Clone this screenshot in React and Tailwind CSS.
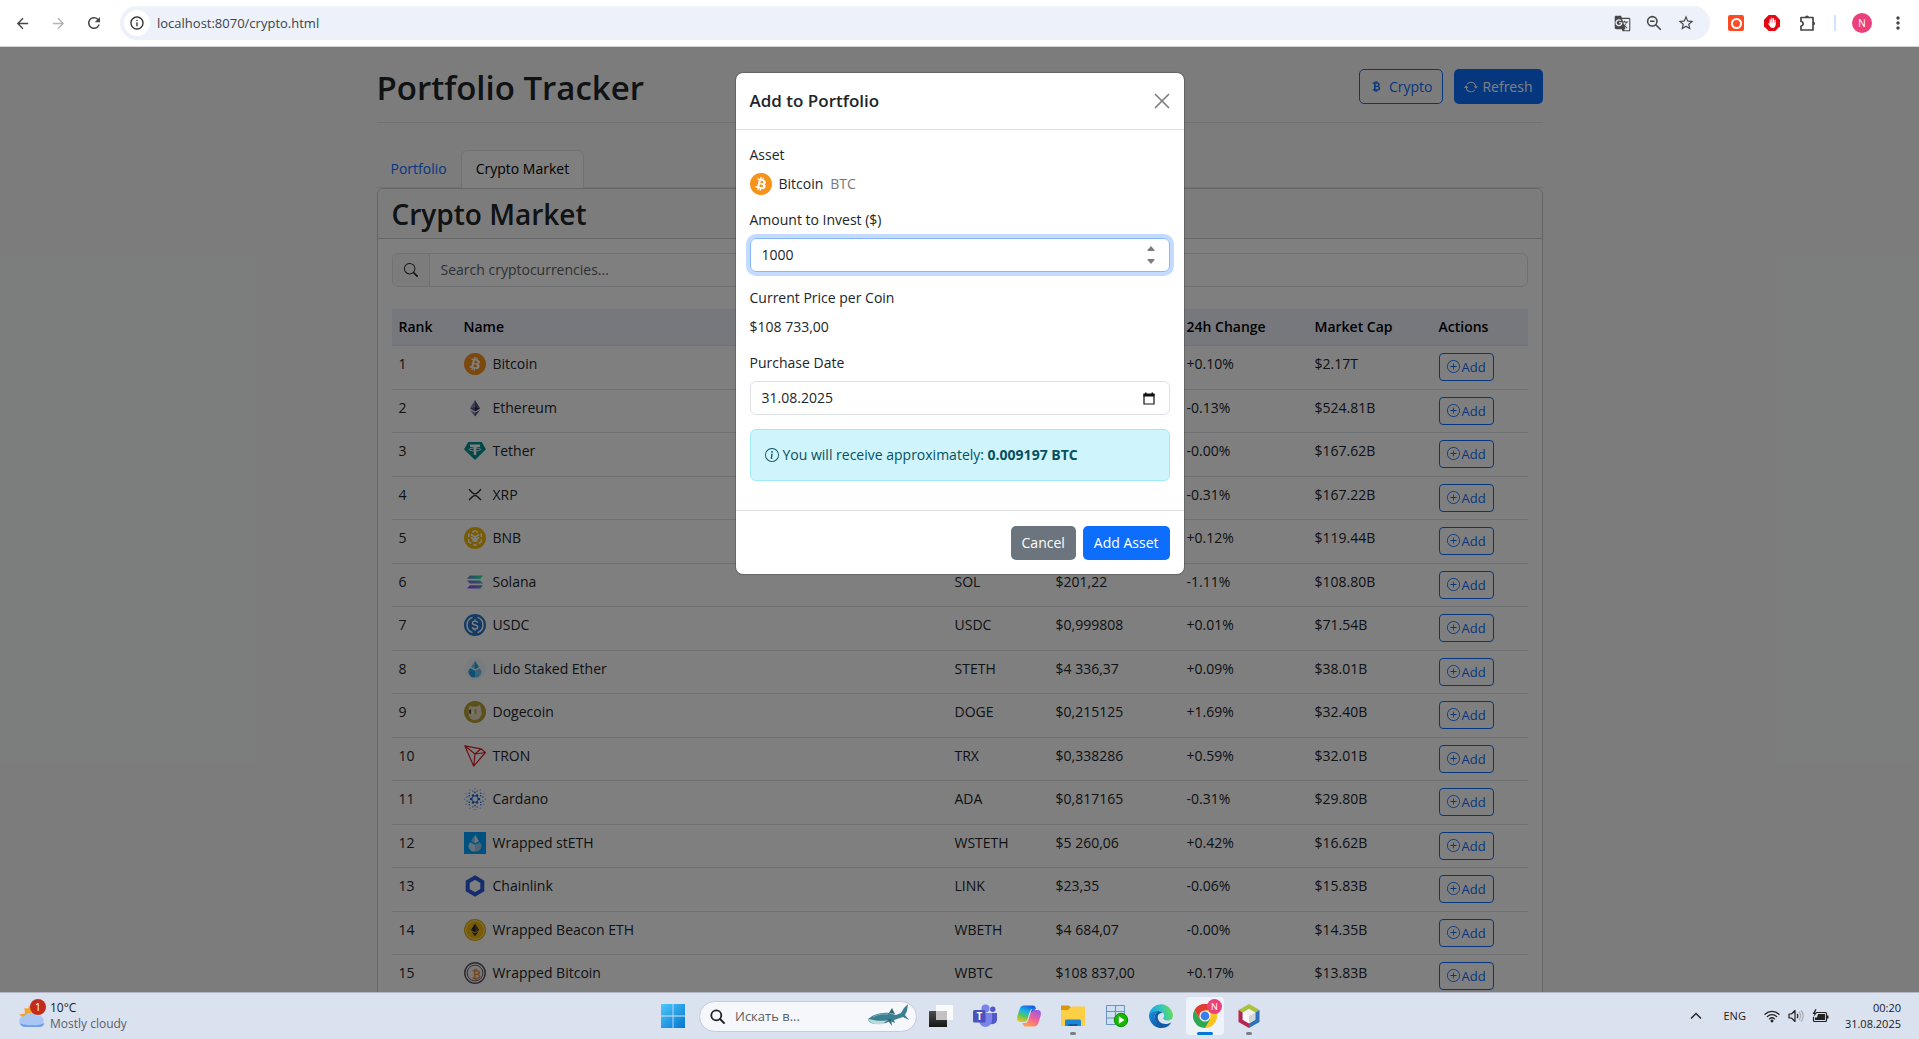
import React from "react";
import {
  BsArrowRepeat,
  BsCurrencyBitcoin,
  BsInfoCircle,
  BsPlusCircle,
  BsSearch,
} from "react-icons/bs";
import {
  MdArrowBack,
  MdArrowForward,
  MdGTranslate,
  MdMoreVert,
  MdOutlineInfo,
  MdRefresh,
  MdStarOutline,
} from "react-icons/md";
import { SiBitcoin } from "react-icons/si";

const ICON = "h-[22px] w-[22px] shrink-0";

function BitcoinIcon() {
  return (
    <span className="flex h-[22px] w-[22px] shrink-0 rounded-full bg-white">
      <SiBitcoin className="h-[22px] w-[22px] text-[#f7931a]" />
    </span>
  );
}

function EthereumIcon() {
  return (
    <svg viewBox="0 0 22 22" className={ICON}>
      <path d="M11 3v6.500L5.900 11.600z" fill="#7f80ad" />
      <path d="M11 3v6.500l5.100 2.100z" fill="#4a4978" />
      <path d="M5.900 11.600 11 9.400v5.200z" fill="#5a5990" />
      <path d="M16.100 11.600 11 9.400v5.200z" fill="#2b2a55" />
      <path d="M5.900 12.900 11 15.800v3.700z" fill="#7f80ad" />
      <path d="M16.100 12.900 11 15.800v3.700z" fill="#4a4978" />
    </svg>
  );
}

function TetherIcon() {
  return (
    <svg viewBox="0 0 22 22" className={ICON}>
      <path d="M4.200 2h13.600L22 9.300 11 20 0 9.300z" fill="#009393" />
      <path d="M6 4.500h10v2.400h-3.700v8.200H9.700V6.900H6z" fill="#fff" />
      <ellipse cx="11" cy="9.500" rx="5.800" ry="1.500" fill="none" stroke="#fff" strokeWidth=".9" />
    </svg>
  );
}

function XrpIcon() {
  return (
    <svg viewBox="0 0 22 22" className={ICON} fill="none" stroke="#23292f" strokeWidth="1.400">
      <path d="M5 5.300l3.400 3.400a3.700 3.700 0 0 0 5.200 0L17 5.300" />
      <path d="M5 16.100l3.400-3.400a3.700 3.700 0 0 1 5.200 0l3.400 3.400" />
    </svg>
  );
}

function BnbIcon() {
  return (
    <svg viewBox="0 0 22 22" className={ICON}>
      <circle cx="11" cy="11" r="11" fill="#f0b90b" />
      <path
        d="M8 5.400 11 3.700l3 1.700M16.300 6.600l1 .7v3M17.300 12.300v2.500l-2.600 1.500M12.600 17.300 11 18.300l-1.600-1M7.300 16.300l-2.600-1.500v-2.500M4.700 10.300v-3l1-.7"
        fill="none"
        stroke="#fff"
        strokeWidth="1.400"
      />
      <path d="M6.800 7.600 11 10l4.200-2.400M11 10v5M7 10.500l2.200 1.300v2.700M15 10.500l-2.200 1.300v2.700" fill="none" stroke="#fff" strokeWidth="1.700" />
    </svg>
  );
}

function SolanaIcon() {
  return (
    <svg viewBox="0 0 22 22" className={ICON}>
      <defs>
        <linearGradient id="sol" x1="0" y1="1" x2="1" y2="0">
          <stop offset=".1" stopColor="#9945ff" />
          <stop offset=".5" stopColor="#5a8fd0" />
          <stop offset=".9" stopColor="#14f195" />
        </linearGradient>
      </defs>
      <path
        d="M5.800 4.500H19l-2.700 3.200H3zM3 9.400h13.300L19 12.600H5.800zM5.800 14.300H19l-2.700 3.200H3z"
        fill="url(#sol)"
      />
    </svg>
  );
}

function UsdcIcon() {
  return (
    <svg viewBox="0 0 22 22" className={ICON} fill="none" stroke="#fff">
      <circle cx="11" cy="11" r="11" fill="#2775ca" stroke="none" />
      <path d="M8.500 3.400a8 8 0 0 0 0 15.200M13.500 3.400a8 8 0 0 1 0 15.200" strokeWidth="1.500" />
      <path
        d="M13.600 8.800c-.2-1.300-1.300-1.700-2.600-1.700s-2.500.6-2.500 1.900c0 2.800 5.200 1.200 5.200 4 0 1.300-1.200 2-2.700 2s-2.600-.6-2.700-1.900M11 5.300v1.800M11 15v1.800"
        strokeWidth="1.400"
      />
    </svg>
  );
}

function Drop({ dark, light, shade }) {
  return (
    <>
      <path d="M11 3 7.200 9 11 11.200 14.800 9z" fill={light} />
      <path d="M11 3v8.200L14.800 9z" fill={shade} />
      <path d="M6.400 10.200 11 12.800v6.400a5.200 5.200 0 0 1-4.600-9z" fill={dark} />
      <path d="M15.600 10.200 11 12.800v6.400a5.200 5.200 0 0 0 4.600-9z" fill={light} />
    </>
  );
}

function LidoIcon() {
  return (
    <svg viewBox="0 0 22 22" className={ICON}>
      <circle cx="11" cy="11" r="11" fill="#f5f7fa" />
      <Drop dark="#1ba0e8" light="#6cc5f2" shade="#2f9fdc" />
    </svg>
  );
}

function DogecoinIcon() {
  return (
    <svg viewBox="0 0 22 22" className={ICON}>
      <circle cx="11" cy="11" r="11" fill="#ba9f33" />
      <path d="M4.500 8 6 4.500l2 1.200 5-.2 3-1.800 1 4.300.8 5.500-3 4.500-5 1.200-3.600-2-1.500-3.500z" fill="#e9dfc0" />
      <path d="M5 9.300l2-1.200v5.200l-1.700-1z" fill="#57461a" />
      <path d="M10.500 8h2v5.200h-2z" fill="#c2a860" />
      <path d="M8 10.500h1.500v2H8z" fill="#fff" />
    </svg>
  );
}

function TronIcon() {
  return (
    <svg viewBox="0 0 22 22" className={ICON} fill="none" stroke="#d9222a" strokeWidth="1.200" strokeLinejoin="round">
      <path d="M.8.800 17 3.800l4.400 3.700L9.700 21.200zM.8.800 11 9l-1.300 12.200M11 9l10.400-1.500M11 9l6-5.200" />
    </svg>
  );
}

const CARDANO_RINGS = [
  { radius: 4, size: 1.3, count: 6, turn: 0 },
  { radius: 6.6, size: 0.8, count: 6, turn: 30 },
  { radius: 8.2, size: 0.7, count: 12, turn: 15 },
  { radius: 10.3, size: 0.5, count: 12, turn: 0 },
];

function CardanoIcon() {
  return (
    <svg viewBox="0 0 22 22" className={ICON} fill="#1c63d6">
      {CARDANO_RINGS.map((ring) =>
        Array.from({ length: ring.count }, (_, i) => {
          const angle = ((ring.turn + (360 / ring.count) * i) * Math.PI) / 180;
          return (
            <circle
              key={`${ring.radius}-${i}`}
              cx={11 + ring.radius * Math.cos(angle)}
              cy={11 + ring.radius * Math.sin(angle)}
              r={ring.size}
            />
          );
        })
      )}
      <circle cx="11" cy="11" r="3.200" fill="none" stroke="#1c63d6" strokeWidth=".9" />
    </svg>
  );
}

function WrappedStethIcon() {
  return (
    <svg viewBox="0 0 22 22" className={ICON}>
      <path d="M0 0h22v22H0z" fill="#00a3ff" />
      <Drop dark="#c3e4f6" light="#94cdec" shade="#dcf0fa" />
    </svg>
  );
}

function ChainlinkIcon() {
  return (
    <svg viewBox="0 0 22 22" className={ICON} fill="none" stroke="#2a5ada" strokeWidth="4">
      <path d="M11 2.600 18.300 6.800v8.400L11 19.400 3.700 15.200V6.800z" />
    </svg>
  );
}

function WrappedBeaconIcon() {
  return (
    <svg viewBox="0 0 22 22" className={ICON}>
      <circle cx="11" cy="11" r="11" fill="#e0ac0c" />
      <circle cx="11" cy="11" r="9.300" fill="#f0b90b" stroke="#fff0b8" strokeWidth=".8" />
      <path d="M11 4.500l4 6.600-4 2.300-4-2.300zM7.500 12.400 11 14.500l3.500-2.100L11 17.300z" fill="#282622" />
      <path d="M11 4.500l4 6.600-4 2.300z" fill="#50483c" />
    </svg>
  );
}

function WrappedBitcoinIcon() {
  return (
    <svg viewBox="0 0 22 22" className={ICON}>
      <circle cx="11" cy="11" r="10.200" fill="#fff" stroke="#5a5564" strokeWidth="1.500" />
      <circle cx="11" cy="11" r="7.900" fill="#f5f3f5" stroke="#5a5564" strokeWidth="1" />
      <BsCurrencyBitcoin x="5.500" y="5.500" width="11" height="11" color="#f09242" />
    </svg>
  );
}

const COINS = [
  { name: "Bitcoin", Icon: BitcoinIcon, symbol: "BTC", price: "$108 733,00", change: "+0.10%", cap: "$2.17T" },
  { name: "Ethereum", Icon: EthereumIcon, symbol: "ETH", price: "$4 348,12", change: "-0.13%", cap: "$524.81B" },
  { name: "Tether", Icon: TetherIcon, symbol: "USDT", price: "$1,00", change: "-0.00%", cap: "$167.62B" },
  { name: "XRP", Icon: XrpIcon, symbol: "XRP", price: "$2,81", change: "-0.31%", cap: "$167.22B" },
  { name: "BNB", Icon: BnbIcon, symbol: "BNB", price: "$857,34", change: "+0.12%", cap: "$119.44B" },
  { name: "Solana", Icon: SolanaIcon, symbol: "SOL", price: "$201,22", change: "-1.11%", cap: "$108.80B" },
  { name: "USDC", Icon: UsdcIcon, symbol: "USDC", price: "$0,999808", change: "+0.01%", cap: "$71.54B" },
  { name: "Lido Staked Ether", Icon: LidoIcon, symbol: "STETH", price: "$4 336,37", change: "+0.09%", cap: "$38.01B" },
  { name: "Dogecoin", Icon: DogecoinIcon, symbol: "DOGE", price: "$0,215125", change: "+1.69%", cap: "$32.40B" },
  { name: "TRON", Icon: TronIcon, symbol: "TRX", price: "$0,338286", change: "+0.59%", cap: "$32.01B" },
  { name: "Cardano", Icon: CardanoIcon, symbol: "ADA", price: "$0,817165", change: "-0.31%", cap: "$29.80B" },
  { name: "Wrapped stETH", Icon: WrappedStethIcon, symbol: "WSTETH", price: "$5 260,06", change: "+0.42%", cap: "$16.62B" },
  { name: "Chainlink", Icon: ChainlinkIcon, symbol: "LINK", price: "$23,35", change: "-0.06%", cap: "$15.83B" },
  { name: "Wrapped Beacon ETH", Icon: WrappedBeaconIcon, symbol: "WBETH", price: "$4 684,07", change: "-0.00%", cap: "$14.35B" },
  { name: "Wrapped Bitcoin", Icon: WrappedBitcoinIcon, symbol: "WBTC", price: "$108 837,00", change: "+0.17%", cap: "$13.83B" },
];

function ToolbarButton({ label, children }) {
  return (
    <button aria-label={label} className="flex h-8 w-9 items-center justify-center">
      {children}
    </button>
  );
}

function BrowserBar() {
  return (
    <header className="flex h-[47px] shrink-0 items-center border-b border-[#d5d5d5] bg-white pr-[3px] pl-1 text-[#474747]">
      <ToolbarButton label="Back">
        <MdArrowBack className="h-[17px] w-[17px]" />
      </ToolbarButton>
      <ToolbarButton label="Forward">
        <MdArrowForward className="h-[17px] w-[17px] text-[#b4b4b4]" />
      </ToolbarButton>
      <ToolbarButton label="Reload">
        <MdRefresh className="h-[18px] w-[18px]" />
      </ToolbarButton>
      <div className="ml-2 flex h-[34px] flex-1 items-center rounded-full bg-[#ecf1fa] pl-1 pr-2">
        <button
          aria-label="Site information"
          className="mr-[7px] flex h-[26px] w-[26px] items-center justify-center rounded-full bg-white"
        >
          <MdOutlineInfo className="h-4 w-4 text-[#303030]" />
        </button>
        <input
          aria-label="Address"
          type="text"
          defaultValue="localhost:8070/crypto.html"
          className="min-w-0 flex-1 text-[13px] text-[#3f4246]"
        />
        <button aria-label="Translate this page" className="flex w-8 justify-center">
          <MdGTranslate className="h-[17px] w-[17px]" />
        </button>
        <button aria-label="Zoom" className="flex w-8 justify-center">
          <svg viewBox="0 0 16 16" className="h-4 w-4" fill="none" stroke="currentColor" strokeWidth="1.600">
            <circle cx="6.300" cy="6.300" r="4.700" />
            <path d="M9.800 9.800l5 5M4 6.300h4.600" />
          </svg>
        </button>
        <button aria-label="Bookmark this tab" className="flex w-8 justify-center">
          <MdStarOutline className="h-[18px] w-[18px]" />
        </button>
      </div>
      <div className="ml-2 flex items-center">
        <ToolbarButton label="Recorder extension">
          <span className="flex h-4 w-4 items-center justify-center rounded-xs bg-[#ff4a26]">
            <span className="h-[11px] w-[11px] rounded-full border-2 border-white" />
          </span>
        </ToolbarButton>
        <ToolbarButton label="Ad blocker">
          <svg viewBox="0 0 16 16" className="h-4 w-4">
            <path d="M4.700 0h6.600L16 4.700v6.600L11.300 16H4.700L0 11.300V4.700z" fill="#e30613" />
            <path
              d="M6.200 8V4.500M7.800 8V3.200M9.400 8V3.700M11 9V5.200"
              stroke="#fff"
              strokeWidth="1.200"
              strokeLinecap="round"
            />
            <path d="M5.600 7.500h6v2.300c0 2-1 3.200-2.800 3.200-1.600 0-2.300-.8-3.100-2L4 8.600c.5-.6 1.100-.3 1.600.2z" fill="#fff" />
          </svg>
        </ToolbarButton>
        <ToolbarButton label="Extensions">
          <svg viewBox="0 0 18 18" className="h-[18px] w-[18px]">
            <path
              d="M2 3.500h12v12.500H2v-4c2.800 0 2.800-4.500 0-4.500z"
              fill="none"
              stroke="currentColor"
              strokeWidth="1.700"
              strokeLinejoin="round"
            />
            <path d="M6 3.500a2 2 0 0 1 4 0zM14 7.500a2 2 0 0 1 0 4z" fill="currentColor" />
          </svg>
        </ToolbarButton>
        <span className="mx-2 h-4 w-[2px] bg-[#d3e3fd]" />
        <ToolbarButton label="Profile">
          <span className="flex h-5 w-5 items-center justify-center rounded-full bg-[#ec407a] text-[10px] text-white">
            N
          </span>
        </ToolbarButton>
        <ToolbarButton label="Menu">
          <MdMoreVert className="h-5 w-5" />
        </ToolbarButton>
      </div>
    </header>
  );
}

function CoinRow({ rank, coin }) {
  const { name, Icon, symbol, price, change, cap } = coin;
  return (
    <tr className="h-[43px] border-b border-[#dee2e6] align-top odd:h-[44px]">
      <td className="px-[7px] pt-[7px]">{rank}</td>
      <td className="px-[7px] pt-[7px]">
        <span className="flex items-center gap-[7px]">
          <Icon />
          {name}
        </span>
      </td>
      <td className="px-[7px] pt-[7px]">{symbol}</td>
      <td className="px-[7px] pt-[7px]">{price}</td>
      <td className="px-[7px] pt-[7px]">{change}</td>
      <td className="px-[7px] pt-[7px]">{cap}</td>
      <td className="px-[7px] pt-[7px]">
        <button className="flex h-[28px] items-center gap-[2px] rounded border border-[#0d6efd] px-[7px] text-[13px] text-[#0d6efd]">
          <BsPlusCircle className="h-[13px] w-[13px]" />
          Add
        </button>
      </td>
    </tr>
  );
}

function MarketPage() {
  return (
    <div className="mx-auto w-full max-w-[1166px]">
      <div className="flex items-start justify-between border-b border-[#dee2e6] pt-[22px] pb-[15px]">
        <h1 className="text-[33px] leading-[38px] font-semibold">Portfolio Tracker</h1>
        <div className="flex gap-[11px]">
          <button className="flex h-[35px] items-center gap-[6px] rounded-[5px] border border-[#0d6efd] px-[10px] text-[#0d6efd]">
            <BsCurrencyBitcoin className="h-[13px] w-[13px]" />
            Crypto
          </button>
          <button className="flex h-[35px] items-center gap-1 rounded-[5px] bg-[#0d6efd] px-[10px] text-white">
            <BsArrowRepeat className="h-[14px] w-[14px]" />
            Refresh
          </button>
        </div>
      </div>

      <nav className="mt-[27px] flex border-b border-[#dee2e6]">
        <a href="#portfolio" className="flex h-[37px] items-center px-[14px] text-[#0d6efd]">
          Portfolio
        </a>
        <a
          href="#market"
          className="-mb-px flex h-[38px] items-center rounded-t-[6px] border border-b-0 border-[#dee2e6] bg-white px-[14px] pb-[2px] text-black"
        >
          Crypto Market
        </a>
      </nav>

      <section className="rounded-[6px] border border-[#cdcdcd] bg-white">
        <div className="flex h-[50px] items-center rounded-t-[6px] border-b border-[#cdcdcd] bg-[#f8f8f8] px-[14px] pt-px">
          <h2 className="text-[28px] leading-[34px] font-semibold">Crypto Market</h2>
        </div>
        <div className="p-[14px]">
          <div className="flex h-[34px] rounded-[6px] border border-[#dee2e6]">
            <label
              htmlFor="coin-search"
              className="flex w-[37px] items-center justify-center rounded-l-[5px] border-r border-[#dee2e6] bg-[#f8f9fa]"
            >
              <BsSearch className="h-[14px] w-[14px]" />
            </label>
            <input
              id="coin-search"
              aria-label="Search"
              type="text"
              placeholder="Search cryptocurrencies..."
              className="min-w-0 flex-1 rounded-r-[5px] px-[11px] placeholder:text-[#5d6266]"
            />
          </div>

          <table className="mt-[22px] w-full table-fixed border-collapse text-left">
            <colgroup>
              <col className="w-[65px]" />
              <col />
              <col className="w-[101px]" />
              <col className="w-[131px]" />
              <col className="w-[128px]" />
              <col className="w-[124px]" />
              <col className="w-[96px]" />
            </colgroup>
            <thead>
              <tr className="h-[36px] border-b border-[#dee2e6] bg-[#edf0fa] text-black">
                <th className="px-[7px] font-semibold">Rank</th>
                <th className="px-[7px] font-semibold">Name</th>
                <th className="px-[7px] font-semibold">Symbol</th>
                <th className="px-[7px] font-semibold">Price</th>
                <th className="px-[7px] font-semibold">24h Change</th>
                <th className="px-[7px] font-semibold">Market Cap</th>
                <th className="px-[7px] font-semibold">Actions</th>
              </tr>
            </thead>
            <tbody>
              {COINS.map((coin, i) => (
                <CoinRow key={coin.name} rank={i + 1} coin={coin} />
              ))}
            </tbody>
          </table>
        </div>
      </section>
    </div>
  );
}

function AddAssetDialog() {
  return (
    <div
      role="dialog"
      aria-labelledby="dialog-title"
      className="mx-auto mt-[26px] w-[448px] overflow-hidden rounded-[7px] bg-white shadow-[0_0_1px_1px_rgba(0,0,0,0.2)]"
    >
      <div className="flex h-[57px] items-center justify-between border-b border-[#dee2e6] px-[14px]">
        <h3 id="dialog-title" className="text-[17px] font-semibold">
          Add to Portfolio
        </h3>
        <button aria-label="Close" className="flex h-4 w-4 items-center justify-center">
          <svg viewBox="0 0 16 16" className="h-4 w-4" stroke="#7f7f7f" strokeWidth="1.700" strokeLinecap="round">
            <path d="M1.500 1.500l13 13M14.500 1.500l-13 13" />
          </svg>
        </button>
      </div>

      <form className="p-[14px] pb-[29px]">
        <p className="mb-[7px]">Asset</p>
        <div className="mb-[14px] flex items-center gap-[7px]">
          <BitcoinIcon />
          <span>Bitcoin</span>
          <span className="text-[#75797d]">BTC</span>
        </div>

        <label htmlFor="amount" className="mb-[7px] block">
          Amount to Invest ($)
        </label>
        <div className="mb-[15px] flex h-[34px] items-center rounded-[6px] border border-[#86b7fe] pr-[14px] ring-4 ring-[#c2dbff]">
          <input
            id="amount"
            type="number"
            defaultValue="1000"
            className="min-w-0 flex-1 [appearance:textfield] px-[11px] outline-none"
          />
          <svg viewBox="0 0 8 20" className="h-5 w-2" fill="#7d7d7d">
            <path d="M4 1l3.500 4v1h-7V5zM4 19l3.500-4v-1h-7v1z" />
          </svg>
        </div>

        <p className="mb-[7px]">Current Price per Coin</p>
        <p className="mb-[14px]">$108 733,00</p>

        <label htmlFor="date" className="mb-[7px] block">
          Purchase Date
        </label>
        <div className="mb-[14px] flex h-[34px] items-center rounded-[6px] border border-[#dee2e6] pr-[14px]">
          <input
            id="date"
            type="text"
            defaultValue="31.08.2025"
            className="min-w-0 flex-1 px-[11px] outline-none"
          />
          <button type="button" aria-label="Open calendar">
            <svg viewBox="0 0 12 13" className="h-[13px] w-3">
              <path d="M1 2.500h10V12H1z" fill="none" stroke="#111" strokeWidth="1.200" />
              <path d="M.5 1.500h11v3H.500zM2 .500h1.500v2H2zM8.500.500H10v2H8.500z" fill="#111" />
            </svg>
          </button>
        </div>

        <div className="flex h-[52px] items-center rounded-[6px] border border-[#9eeaf9] bg-[#cff4fc] px-[14px] text-[#055160]">
          <BsInfoCircle className="mr-1 h-[14px] w-[14px]" />
          <p>
            You will receive approximately: <strong>0.009197 BTC</strong>
          </p>
        </div>
      </form>

      <div className="flex justify-end gap-[7px] border-t border-[#dee2e6] px-[14px] pt-[15px] pb-[14px]">
        <button className="h-[34px] rounded-[5px] bg-[#6c757d] px-[11px] text-white">Cancel</button>
        <button className="h-[34px] rounded-[5px] bg-[#0d6efd] px-[11px] text-white">Add Asset</button>
      </div>
    </div>
  );
}

function WindowsIcon() {
  return (
    <svg viewBox="0 0 24 24" className="h-6 w-6">
      <defs>
        <linearGradient id="win" x1="0" y1="0" x2="1" y2="1" gradientUnits="objectBoundingBox">
          <stop offset="0" stopColor="#4cc8fb" />
          <stop offset="1" stopColor="#0575d0" />
        </linearGradient>
      </defs>
      <path d="M0 0h11.600v11.600H0zM12.400 0H24v11.600H12.400zM0 12.400h11.600V24H0zM12.400 12.400H24V24H12.400z" fill="url(#win)" />
    </svg>
  );
}

function WhaleIcon() {
  return (
    <svg viewBox="0 0 42 24" className="h-6 w-[42px]">
      <path d="M1 15c5-4 12-7 21-6l7 2 5-2 3-5 4-4-1 7-2 4 4 5-6-3-6 2-3 1 1 3-5-2-4 2-9 1c-5 0-9-2-9-5z" fill="#3d7f92" />
      <path d="M1 15c6 1 13 3 20 1l-6 4c-7 1-13-1-14-5z" fill="#b9dcda" />
      <path d="M6 13c5-3 10-3 15-3" stroke="#79b7c2" fill="none" />
      <path d="M22 9l3-5 3 6zM20 15l5 7-1-7z" fill="#2f6577" />
    </svg>
  );
}

function TaskViewIcon() {
  return (
    <svg viewBox="0 0 24 24" className="h-6 w-6">
      <defs>
        <linearGradient id="tv" x1="0" y1="0" x2="0" y2="1">
          <stop offset="0" stopColor="#4e4e4e" />
          <stop offset="1" stopColor="#161616" />
        </linearGradient>
      </defs>
      <path d="M7 1h17v15H7z" fill="#fafafa" />
      <path d="M0 7h18v16H0z" fill="url(#tv)" />
      <path d="M7 7h11v9H7z" fill="#c2c2c2" />
    </svg>
  );
}

function TeamsIcon() {
  return (
    <svg viewBox="0 0 24 24" className="h-6 w-6">
      <circle cx="12.500" cy="4.500" r="4" fill="#7b83eb" />
      <circle cx="19.800" cy="5.300" r="2.700" fill="#5059c9" />
      <path d="M15 9h9v7a5 5 0 0 1-9 2z" fill="#5059c9" />
      <path d="M6 9h13v7.500a6.500 6.500 0 0 1-13 0z" fill="#7b83eb" />
      <rect x="0" y="6" width="12.500" height="12.500" rx="1.500" fill="#4b53bc" />
      <text x="6.300" y="15.800" textAnchor="middle" fontSize="10" fontWeight="700" fill="#fff">
        T
      </text>
    </svg>
  );
}

function CopilotIcon() {
  return (
    <svg viewBox="0 0 24 24" className="h-6 w-6">
      <defs>
        <linearGradient id="cpA" x1=".6" y1="0" x2=".2" y2="1">
          <stop offset="0" stopColor="#1b5fe0" />
          <stop offset=".35" stopColor="#18b4e8" />
          <stop offset=".65" stopColor="#5fc35b" />
          <stop offset="1" stopColor="#f5c518" />
        </linearGradient>
        <linearGradient id="cpB" x1=".8" y1="0" x2=".3" y2="1">
          <stop offset="0" stopColor="#9a5be8" />
          <stop offset=".5" stopColor="#f0609a" />
          <stop offset="1" stopColor="#ffa04a" />
        </linearGradient>
      </defs>
      <path d="M7 1.500h9c2 0 2.500 1.500 3 3.500h-3c-2 0-2.600 1-3.300 3l-2.400 7.500c-.5 1.500-1.300 2.500-3.300 2.500H3.500C.500 18-.500 15.500.300 12.500l2.500-8C3.500 2.500 5 1.500 7 1.500z" fill="url(#cpA)" />
      <path d="M17 22.500H8.500c-2 0-2.500-1.500-3-3.500H8c2 0 2.600-1 3.300-3l2.400-7.500C14.200 7 15 6 17 6h3.500c3 0 4 2.500 3.200 5.500l-2.500 8c-.7 2-2.200 3-4.200 3z" fill="url(#cpB)" />
      <path d="M13.700 8.500 15 5.500c2-.5 3.500 0 3.500.5-2.600 0-3 1-4.800 2.500z" fill="#1848b8" />
    </svg>
  );
}

function ExplorerIcon() {
  return (
    <svg viewBox="0 0 24 24" className="h-6 w-6">
      <path d="M0 1.500h8l2.500 2.500v3H0z" fill="#d9980c" />
      <path d="M9 4l2-1.500h13V22H0V6h7z" fill="#fdcf45" />
      <path d="M4 22v-5a1.500 1.500 0 0 1 1.500-1.500h13A1.500 1.500 0 0 1 20 17v5z" fill="#1b86d6" />
      <path d="M7.500 22v-2h9v2z" fill="#0b5a9c" />
    </svg>
  );
}

function DatabaseIcon() {
  return (
    <svg viewBox="0 0 24 24" className="h-6 w-6">
      <path d="M1.500 1.500h18v19h-18z" fill="#cfe0f3" stroke="#6d93bf" />
      <path d="M1.500 7.500h18M1.500 14h18M10.500 1.500v19" stroke="#6d93bf" strokeWidth="1.200" />
      <circle cx="16" cy="16" r="6.700" fill="#16b800" stroke="#0c8c00" />
      <path d="M13.800 12.300v7.400l5.700-3.700z" fill="#fff" />
    </svg>
  );
}

function EdgeIcon() {
  return (
    <svg viewBox="0 0 24 24" className="h-6 w-6">
      <defs>
        <linearGradient id="edTop" x1="0" y1=".6" x2="1" y2=".4">
          <stop offset="0" stopColor="#1b9de2" />
          <stop offset=".5" stopColor="#2dc2c8" />
          <stop offset="1" stopColor="#6be04a" />
        </linearGradient>
        <linearGradient id="edLow" x1="0" y1="0" x2="1" y2="1">
          <stop offset="0" stopColor="#1a8fe0" />
          <stop offset="1" stopColor="#0b4a94" />
        </linearGradient>
      </defs>
      <path d="M.100 11A12 12 0 0 1 24 11.500c0 3.500-2.700 5-5.500 5-3 0-4.300-1.300-4.300-2.200 0-.6 1-1 1-2.600C15.200 9 12.500 7 9 7 4.500 7 1 9.500.100 11z" fill="url(#edTop)" />
      <path d="M.100 11C1 8.500 4.500 7 9 7c-3 1.700-3.300 4.500-3.300 6 0 5 4 9.500 9.500 10.500A12 12 0 0 1 .100 11z" fill="url(#edLow)" />
      <path d="M8.800 12.500c-.5 4.500 3.500 7.500 7.500 7.500 2.500 0 4.500-.8 6-1.800-1.500 3-4 5-7 5.500C9.500 23.500 5.700 18 5.700 13c0-3 1.500-5 3.300-6 2 0 3.700.7 4.700 1.800-2.300 0-4.600 1.300-4.900 3.700z" fill="#0f5cab" />
    </svg>
  );
}

function ChromeIcon() {
  return (
    <svg viewBox="0 0 24 24" className="h-6 w-6">
      <path d="M12 12 1.600 6A12 12 0 0 1 22.400 6z" fill="#e33b2e" />
      <path d="M12 12V6h10.400A12 12 0 0 1 12 24z" fill="#fcc31e" />
      <path d="M12 12 17.200 15 12 24A12 12 0 0 1 1.600 6L6.800 15z" fill="#2da94f" />
      <path d="M12 6h10.400A12 12 0 0 0 1.600 6l5.200 9z" fill="#e33b2e" />
      <circle cx="12" cy="12" r="5.600" fill="#fff" />
      <circle cx="12" cy="12" r="4.400" fill="#3b7ded" />
    </svg>
  );
}

function CubeIcon() {
  return (
    <svg viewBox="0 0 24 24" className="h-6 w-6">
      <path d="M12 0 22.500 6 18.500 8.500 12 4.800 5.500 8.500 1.500 6z" fill="#a9c23a" />
      <path d="M1.500 6 5.500 8.500v7.300L12 19.500V24L1.500 18z" fill="#b5274f" />
      <path d="M22.500 6 18.500 8.500v7.300L12 19.500V24l10.500-6z" fill="#2b72b8" />
      <path d="M12 5.300 18 8.800v6.800L12 19l-6-3.400V8.800z" fill="#f2f2f2" />
      <path d="M12 12l6-3.200v6.800L12 19z" fill="#d5d5d5" />
      <path d="M12 12 6 8.800v6.800L12 19z" fill="#fff" />
    </svg>
  );
}

function WeatherIcon() {
  return (
    <svg viewBox="0 0 26 26" className="h-[26px] w-[26px]">
      <path d="M10 2l2.500 4.500L18 8l-3 5-9 3-6-4.500 6-1L5.500 5l4 .500z" fill="#f5a524" />
      <path d="M6 24a5.500 5.500 0 0 1-.5-11A7 7 0 0 1 17 12.500a6 6 0 0 1 3.500 11.500z" fill="#a9c6f5" />
      <path d="M1 20.500A6 6 0 0 0 6 24h14.500a5.500 5.500 0 0 0 5-4c-5 3-17 3-24.500.500z" fill="#6f9fea" />
    </svg>
  );
}

const APPS = [
  { name: "Task view", Icon: TaskViewIcon },
  { name: "Teams", Icon: TeamsIcon },
  { name: "Copilot", Icon: CopilotIcon },
  { name: "File Explorer", Icon: ExplorerIcon, running: true },
  { name: "Database tool", Icon: DatabaseIcon },
  { name: "Edge", Icon: EdgeIcon },
  { name: "Chrome", Icon: ChromeIcon, active: true },
  { name: "NetBeans", Icon: CubeIcon, running: true },
];

function TaskbarApp({ app }) {
  const { name, Icon, running, active } = app;
  return (
    <button
      aria-label={name}
      className={
        active
          ? "relative mx-[3px] flex h-[38px] w-[38px] items-center justify-center rounded bg-[#eef2fa]"
          : "relative mx-[3px] flex h-[38px] w-[38px] items-center justify-center"
      }
    >
      <Icon />
      {active && (
        <>
          <span className="absolute top-[2px] right-[2px] flex h-[15px] w-[15px] items-center justify-center rounded-full bg-[#ec407a] text-[9px] text-white">
            N
          </span>
          <span className="absolute bottom-0 h-[3px] w-4 rounded-full bg-[#0078d4]" />
        </>
      )}
      {running && <span className="absolute bottom-0 h-[3px] w-[6px] rounded-full bg-[#7c7f87]" />}
    </button>
  );
}

function Taskbar() {
  return (
    <footer className="flex h-[47px] shrink-0 items-center border-t border-[#b4b8c4] bg-[#dae1ef] text-[12px] leading-4 text-[#1b1b1b]">
      <div className="flex flex-1 items-center gap-[5px] pl-[19px]">
        <span className="relative">
          <WeatherIcon />
          <span className="absolute -top-[4px] -right-[1px] flex h-4 w-4 items-center justify-center rounded-full bg-[#c42b1c] text-[11px] text-white">
            1
          </span>
        </span>
        <div>
          <p>10°C</p>
          <p className="text-[#5c6068]">Mostly cloudy</p>
        </div>
      </div>

      <div className="flex items-center pl-[2px]">
        <button aria-label="Start" className="flex w-11 justify-center">
          <WindowsIcon />
        </button>
        <label className="mr-[2px] ml-1 flex h-[31px] w-[218px] items-center gap-[10px] rounded-full border border-[#c5cbd8] bg-[#f5f7fb] pr-[7px] pl-[10px]">
          <svg viewBox="0 0 15 15" className="h-[15px] w-[15px] shrink-0" fill="none" stroke="#222" strokeWidth="1.800" strokeLinecap="round">
            <circle cx="6.300" cy="6.300" r="5" />
            <path d="M10 10l4 4" />
          </svg>
          <input
            type="text"
            aria-label="Search"
            placeholder="Искать в..."
            className="min-w-0 flex-1 text-[13px] placeholder:text-[#5b5e64]"
          />
          <WhaleIcon />
        </label>
        {APPS.map((app) => (
          <TaskbarApp key={app.name} app={app} />
        ))}
      </div>

      <div className="flex flex-1 items-center justify-end pr-[18px] text-[11px]">
        <button aria-label="Show hidden icons" className="mr-[21px]">
          <svg viewBox="0 0 12 8" className="h-2 w-3" fill="none" stroke="#222" strokeWidth="1.400">
            <path d="M1 6.500 6 1.500l5 5" />
          </svg>
        </button>
        <span className="mr-[18px]">ENG</span>
        <svg viewBox="0 0 16 14" className="mr-2 h-[14px] w-4" fill="none" stroke="#222" strokeWidth="1.300" strokeLinecap="round">
          <path d="M1 5.200a10 10 0 0 1 14 0M3.300 7.600a6.700 6.700 0 0 1 9.400 0M5.500 9.900a3.600 3.600 0 0 1 5 0" />
          <circle cx="8" cy="12" r=".8" fill="#222" />
        </svg>
        <svg viewBox="0 0 16 14" className="mr-2 h-[14px] w-4" fill="none" stroke="#222" strokeWidth="1.200" strokeLinejoin="round">
          <path d="M1 5h2.500L7 1.500v11L3.500 9H1z" />
          <path d="M9 5a3 3 0 0 1 0 4" />
          <path d="M11 3a6 6 0 0 1 0 8M13 1.500a8 8 0 0 1 0 11" stroke="#a5aab6" />
        </svg>
        <svg viewBox="0 0 17 14" className="mr-4 h-[14px] w-[17px]">
          <path d="M4 3.500h9.500a1 1 0 0 1 1 1v7a1 1 0 0 1-1 1h-11a1 1 0 0 1-1-1V8" fill="none" stroke="#222" strokeWidth="1.200" />
          <path d="M6 5h7v6H3V8.500h2zM15 6.500h1.500v3H15zM3.500 0 .500 5h2L1.500 8 5 3.800H3.200L4.500 0z" fill="#222" />
        </svg>
        <div className="text-right">
          <p>00:20</p>
          <p>31.08.2025</p>
        </div>
      </div>
    </footer>
  );
}

export default function App() {
  return (
    <div className="flex h-screen flex-col overflow-hidden bg-[#f8f9fa] font-['Open_Sans','Noto_Sans',sans-serif] text-[14px] leading-[22px] text-[#212529]">
      <BrowserBar />
      <main className="relative min-h-0 flex-1 overflow-hidden">
        <MarketPage />
        <div className="absolute inset-0 bg-black/50">
          <AddAssetDialog />
        </div>
      </main>
      <Taskbar />
    </div>
  );
}
